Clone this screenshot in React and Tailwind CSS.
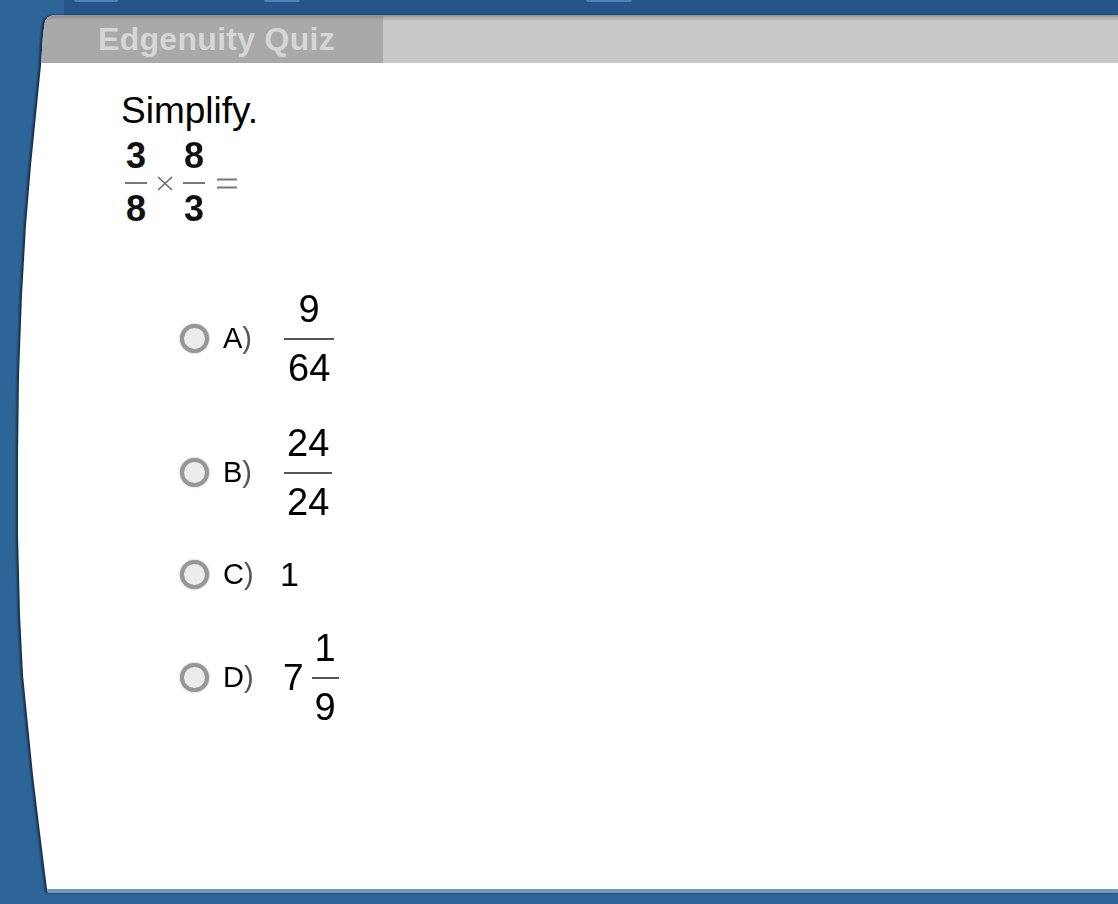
import React from "react";

// Stacked fraction: numerator, rule, denominator
function Frac({ top, bottom, size = "text-[38px]", gapTop = "mt-[10px]", gapBottom = "mt-[9px]", rule = "h-[2px] bg-[#555]", pad = "px-[4px]", bold = false }) {
  return (
    <div className={`flex flex-col items-stretch ${bold ? "font-bold" : ""}`}>
      <div className={`${size} leading-none text-center ${pad}`}>{top}</div>
      <div className={`${gapTop} ${rule}`} />
      <div className={`${gapBottom} ${size} leading-none text-center ${pad}`}>{bottom}</div>
    </div>
  );
}

function Radio() {
  return (
    <div className="w-[29px] h-[29px] shrink-0 rounded-full border-[4px] border-[#979797] bg-[#ececec] shadow-[0_0_2px_rgba(110,110,110,0.7)]" />
  );
}

function Option({ letter, children, className = "" }) {
  return (
    <div className={`flex items-center ${className}`}>
      <Radio />
      <div className="ml-[14px] w-[61px] text-[29px] leading-none">
        {letter}
        <span className="text-[#555]">)</span>
      </div>
      {children}
    </div>
  );
}

export default function App() {
  return (
    <div className="w-[1118px] h-[904px] bg-[#2d6598] flex flex-col overflow-hidden font-['Liberation_Sans',Arial,sans-serif] text-black">
      {/* strip above the quiz panel */}
      <div className="h-[15px] shrink-0 flex">
        <div className="w-[64px] bg-[#2d6598]" />
        <div className="flex-1 flex items-start bg-[#24568a]">
          <div className="ml-[10px] w-[44px] h-[2px] rounded-b-full bg-[#4f82b6]" />
          <div className="ml-[146px] w-[36px] h-[2px] rounded-b-full bg-[#4f82b6]" />
          <div className="ml-[286px] w-[46px] h-[2px] rounded-b-full bg-[#4f82b6]" />
        </div>
      </div>

      {/* quiz panel with curved left edge */}
      <div className="flex-1 flex flex-col [filter:drop-shadow(-2px_0_1px_rgba(12,28,48,0.8))]">
        <div className="flex-1 flex flex-col bg-white [clip-path:polygon(54px_0,48px_2px,45px_6px,43px_20px,41px_50px,36px_100px,31px_150px,26px_210px,22px_280px,19px_360px,18px_440px,18px_520px,20px_600px,23px_660px,28px_710px,33px_760px,39px_810px,44px_850px,47px_874px,48px_100%,100%_100%,100%_0)]">
          <div className="h-[48px] shrink-0 flex border-t border-[#8e9caa]">
            <div className="w-[383px] pl-[98px] bg-[linear-gradient(#8f8f8f,#a9a9a9_4px,#a9a9a9)] text-[32px] leading-[47px] font-bold text-[#d6d6d6] tracking-[0.3px]">
              Edgenuity Quiz
            </div>
            <div className="flex-1 bg-[linear-gradient(#9e9e9e,#c8c8c8_5px,#c8c8c8)]" />
          </div>

          <div className="flex-1 pt-[29px] pl-[121px]">
            <div className="text-[37px] leading-none">Simplify.</div>

            <div className="mt-[9px] ml-[4px] flex items-center text-[#111]">
              <Frac top="3" bottom="8" size="text-[36px]" gapTop="mt-[8px]" gapBottom="mt-[7px]" rule="h-[2px] bg-[#777]" pad="px-[1px]" bold />
              <svg width="16" height="15" viewBox="0 0 16 15" className="mx-[10px] mt-[2px]">
                <path d="M1 1 L15 14 M15 1 L1 14" stroke="#666" strokeWidth="1.5" fill="none" />
              </svg>
              <Frac top="8" bottom="3" size="text-[36px]" gapTop="mt-[8px]" gapBottom="mt-[7px]" rule="h-[2px] bg-[#777]" pad="px-[1px]" bold />
              <svg width="20" height="11" viewBox="0 0 20 11" className="ml-[12px] mt-[2px]">
                <path d="M0 1.5 H20 M0 9.5 H20" stroke="#777" strokeWidth="2" fill="none" />
              </svg>
            </div>

            <div className="ml-[59px] mt-[63px] flex flex-col">
              <Option letter="A">
                <Frac top="9" bottom="64" />
              </Option>
              <Option letter="B" className="mt-[37px]">
                <Frac top="24" bottom="24" pad="px-[3px]" />
              </Option>
              <Option letter="C" className="mt-[36px]">
                <div className="-ml-[4px] text-[34px] leading-none">1</div>
              </Option>
              <Option letter="D" className="mt-[38px]">
                <div className="-ml-[1px] text-[37px] leading-none">7</div>
                <div className="ml-[8px]">
                  <Frac top="1" bottom="9" pad="px-[3px]" />
                </div>
              </Option>
            </div>
          </div>

          <div className="h-[4px] shrink-0 bg-[#7099bb]" />
        </div>
      </div>
      <div className="h-[11px] shrink-0" />
    </div>
  );
}
